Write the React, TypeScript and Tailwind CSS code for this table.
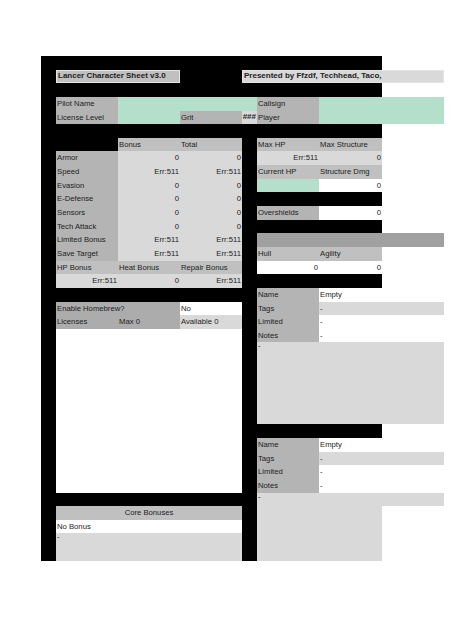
import React from "react";

type Align = "left" | "right" | "center";

type Cell = {
  span: number;
  bg: string;
  text?: string;
  align?: Align;
  bold?: boolean;
  top?: boolean;
  framed?: boolean;
};

const K = "bg-black";
const W = "bg-white";
const L = "bg-[#b4b4b4]";
const H = "bg-[#c0c0c0]";
const V = "bg-[#d9d9d9]";
const G = "bg-[#b4dfcb]";
const D = "bg-[#acacac]";
const BAR = "bg-[#a0a0a0]";

const spanClass: Record<number, string> = {
  1: "col-span-1",
  2: "col-span-2",
  3: "col-span-3",
  4: "col-span-4",
  5: "col-span-5",
  6: "col-span-6",
  7: "col-span-7",
  8: "col-span-8",
};

const alignClass: Record<Align, string> = {
  left: "justify-start",
  right: "justify-end",
  center: "justify-center",
};

function c(span: number, bg: string, text?: string, align: Align = "left", extra: Partial<Cell> = {}): Cell {
  return { span, bg, text, align, ...extra };
}

const a = c(1, K);
const blackRow: Cell[] = [c(7, K), c(1, W)];

function stat(label: string, bonus: string, total: string, right: Cell[]): Cell[] {
  return [a, c(1, L, label), c(1, V, bonus, "right"), c(1, V, total, "right"), c(1, K), ...right];
}

const leftWhite: Cell[] = [a, c(3, W), c(1, K)];

const rows: Cell[][] = [
  blackRow,
  [
    a,
    c(2, H, "Lancer Character Sheet v3.0", "left", { bold: true, framed: true }),
    c(1, K),
    c(4, V, "Presented by Ffzdf, Techhead, Taco,", "left", { bold: true, framed: true }),
  ],
  blackRow,
  [a, c(1, L, "Pilot Name"), c(3, G), c(1, L, "Callsign"), c(2, G)],
  [
    a,
    c(1, L, "License Level"),
    c(1, G),
    c(1, L, "Grit"),
    c(1, V, "###", "right", { bold: true }),
    c(1, L, "Player"),
    c(2, G),
  ],
  blackRow,
  [a, c(1, K), c(1, H, "Bonus"), c(1, H, "Total"), c(1, K), c(1, H, "Max HP"), c(1, H, "Max Structure"), c(1, W)],
  stat("Armor", "0", "0", [c(1, V, "Err:511", "right"), c(1, V, "0", "right"), c(1, W)]),
  stat("Speed", "Err:511", "Err:511", [c(1, H, "Current HP"), c(1, H, "Structure Dmg"), c(1, W)]),
  stat("Evasion", "0", "0", [c(1, G), c(1, W, "0", "right"), c(1, W)]),
  stat("E-Defense", "0", "0", [c(2, K), c(1, W)]),
  stat("Sensors", "0", "0", [c(1, L, "Overshields"), c(1, W, "0", "right"), c(1, W)]),
  stat("Tech Attack", "0", "0", [c(2, K), c(1, W)]),
  stat("Limited Bonus", "Err:511", "Err:511", [c(3, BAR)]),
  stat("Save Target", "Err:511", "Err:511", [c(1, H, "Hull"), c(1, H, "Agility"), c(1, W)]),
  [
    a,
    c(1, H, "HP Bonus"),
    c(1, H, "Heat Bonus"),
    c(1, H, "Repair Bonus"),
    c(1, K),
    c(1, W, "0", "right"),
    c(1, W, "0", "right"),
    c(1, W),
  ],
  [a, c(1, V, "Err:511", "right"), c(1, V, "0", "right"), c(1, V, "Err:511", "right"), c(3, K), c(1, W)],
  [a, c(3, K), c(1, K), c(1, L, "Name"), c(1, W, "Empty"), c(1, W)],
  [a, c(2, D, "Enable Homebrew?"), c(1, W, "No"), c(1, K), c(1, L, "Tags"), c(2, V, "-")],
  [a, c(1, D, "Licenses"), c(1, D, "Max 0"), c(1, V, "Available 0"), c(1, K), c(1, L, "Limited"), c(2, W, "-")],
  [...leftWhite, c(1, L, "Notes"), c(2, W, "-")],
  [...leftWhite, c(3, V, "-", "left", { top: true })],
  [...leftWhite, c(3, V)],
  [...leftWhite, c(3, V)],
  [...leftWhite, c(3, V)],
  [...leftWhite, c(3, V)],
  [...leftWhite, c(3, V)],
  [...leftWhite, c(2, K), c(1, W)],
  [...leftWhite, c(1, L, "Name"), c(1, W, "Empty"), c(1, W)],
  [...leftWhite, c(1, L, "Tags"), c(2, V, "-")],
  [...leftWhite, c(1, L, "Limited"), c(2, W, "-")],
  [...leftWhite, c(1, L, "Notes"), c(2, W, "-")],
  [a, c(3, K), c(1, K), c(3, V, "-", "left", { top: true })],
  [a, c(3, H, "Core Bonuses", "center"), c(1, K), c(2, V), c(1, W)],
  [a, c(3, W, "No Bonus"), c(1, K), c(2, V), c(1, W)],
  [a, c(3, V, "-", "left", { top: true }), c(1, K), c(2, V), c(1, W)],
  [a, c(3, V), c(1, K), c(2, V), c(1, W)],
];

function SheetCell({ cell }: { cell: Cell }) {
  const classes = [
    spanClass[cell.span],
    cell.bg,
    "flex overflow-hidden whitespace-nowrap px-[1px]",
    cell.top ? "items-start" : "items-center",
    alignClass[cell.align ?? "left"],
    cell.bold ? "font-bold text-[8px]" : "text-[7.7px]",
    cell.framed ? "border border-[#e4e4e4]" : "",
  ].join(" ");

  return (
    <div className={classes}>
      <span className="leading-none">{cell.text}</span>
    </div>
  );
}

export default function App() {
  return (
    <main className="min-h-screen bg-white pl-[41px] pt-[56px] font-['Liberation_Sans',Arial,sans-serif] text-[#222]">
      <div className="grid w-[403px] grid-cols-[15px_62px_62px_62px_15px_62px_63px_62px] auto-rows-[13.65px]">
        {rows.map((row, r) =>
          row.map((cell, i) => <SheetCell key={`${r}-${i}`} cell={cell} />),
        )}
      </div>
    </main>
  );
}
